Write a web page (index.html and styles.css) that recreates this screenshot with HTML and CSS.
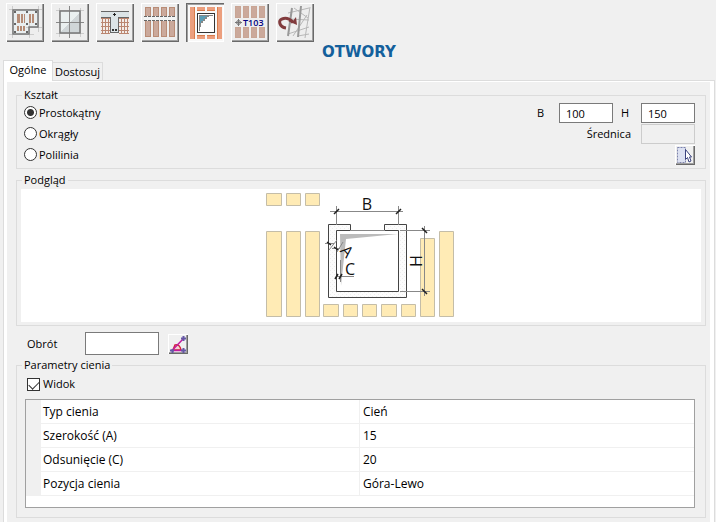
FILE: index.html
```html
<!DOCTYPE html>
<html lang="pl">
<head>
<meta charset="utf-8">
<meta name="viewport" content="width=device-width, initial-scale=1">
<title>Otwory</title>
<link rel="stylesheet" href="styles.css">
</head>
<body>
<header>
  <nav class="toolbar" aria-label="Narzędzia">
    <button class="tool" type="button" aria-label="Płyta">
      <svg viewBox="0 0 38 39" shape-rendering="crispEdges">
        <path d="M6 6H32V24H23V31H6Z" fill="#e9eeef"/>
        <path d="M3 6.500H36M6.500 3V35M32.500 3V29M3 31.500H28M23.500 20V35M20 24.500H36" stroke="#ccc" fill="none"/>
        <path d="M7 7H32V24H23V31H7Z" fill="none" stroke="#777" stroke-width="1.500" shape-rendering="auto"/>
        <path d="M11 11h3v9h-3zM15 11h2v9h-2zM18 11h1v9h-1zM23 11h2v9h-2zM26 11h2v9h-2zM11 23h2v5h-2zM14 23h2v5h-2zM17 23h2v5h-2z" fill="#b58b75"/>
        <path d="M8 8h2v2H8zM20 8h2v2h-2zM29 8h2v2h-2zM8 20h2v2H8zM29 20h2v2h-2zM20 20h2v2h-2zM8 28h2v2H8zM20 28h2v2h-2z" fill="#666"/>
      </svg>
    </button>
    <button class="tool" type="button" aria-label="Okno">
      <svg viewBox="0 0 38 39" shape-rendering="crispEdges">
        <path d="M9 8H29V30H9Z" fill="#eaf0f0"/>
        <path d="M29 10V30H9V29Z" fill="#d0d6d8"/>
        <path d="M5 7.500H33M5 30.500H33M8.500 5V34M29.500 5V34" stroke="#ccc" fill="none"/>
        <path d="M5 19.500H33M18.500 3V35" stroke="#888" fill="none"/>
        <path d="M9 8H29V30H9Z" fill="none" stroke="#777" stroke-width="1.500" shape-rendering="auto"/>
      </svg>
    </button>
    <button class="tool" type="button" aria-label="Podciąg">
      <svg viewBox="0 0 38 39" shape-rendering="crispEdges">
        <path d="M5 15H14V31H5zM23 15H33V31H23z" fill="#f3ece8"/>
        <path d="M5 15.500H14M5 19.500H14M5 23.500H14M5 27.500H14M5 30.500H14M6.500 15V31M9.500 15V31M12.500 15V31M23 15.500H33M23 19.500H33M23 23.500H33M23 27.500H33M23 30.500H33M25.500 15V31M28.500 15V31M31.500 15V31" stroke="#bb8670" fill="none"/>
        <path d="M5 9H33V14H23V30H14V14H5Z" fill="#dce4e7"/>
        <path d="M5 8.500H33M5 14.500H14.500V29.500H22.500V14.500H33" fill="none" stroke="#666"/>
        <path d="M17 11.500H20M18.500 10V13" stroke="#222" fill="none"/>
        <path d="M16 26h2v2h-2zM19 26h2v2h-2z" fill="#333"/>
      </svg>
    </button>
    <button class="tool" type="button" aria-label="Pasy">
      <svg viewBox="0 0 38 39" shape-rendering="crispEdges">
        <path d="M4.500 4.500h5v29h-5zM12.500 4.500h5v29h-5zM20.500 4.500h5v29h-5zM28.500 4.500h5v29h-5z" fill="#cba99b" stroke="#b98c76"/>
        <path d="M3 13H35V18H3z" fill="#f2f4f4"/>
        <path d="M3 13.500H35M3 17.500H35" fill="none" stroke="#666" stroke-dasharray="3 1"/>
      </svg>
    </button>
    <button class="tool tool-active" type="button" aria-label="Otwory" aria-pressed="true">
      <svg viewBox="0 0 38 39" shape-rendering="crispEdges">
        <path d="M4 4h5v32H4zM31 4h5v32h-5zM11 4h8v4h-8zM21 4h8v4h-8zM11 32h8v4h-8zM21 32h8v4h-8z" fill="#ec9f7e"/>
        <path d="M8.500 4v32M31.500 4v32M11 7.500h8M21 7.500h8M11 32.500h8M21 32.500h8" fill="none" stroke="#d97c4b"/>
        <path d="M11.500 10.500H28.500V29.500H11.500Z" fill="#fff" stroke="#333"/>
        <path d="M13 12H27V13H23V14H21V16H19V18H17V20H15V24H14V28H13Z" fill="#888"/>
        <path d="M14 13H21V14H19V16H17V18H15V20H14Z" fill="#5a9db5"/>
      </svg>
    </button>
    <button class="tool" type="button" aria-label="Oznaczenie T103">
      <svg viewBox="0 0 38 39">
        <g shape-rendering="crispEdges"><path d="M4.500 3.500h5v11h-5zM12.500 3.500h5v11h-5zM20.500 3.500h5v11h-5zM28.500 3.500h5v11h-5zM4.500 24.500h5v10h-5zM12.500 24.500h5v10h-5zM20.500 24.500h5v10h-5zM28.500 24.500h5v10h-5z" fill="#cba99b" stroke="#c9a594"/></g>
        <path d="M4 19.500h7M7.500 16v7" stroke="#777"/><circle cx="7.500" cy="19.500" r="2" fill="none" stroke="#777"/>
        <text class="tag" x="12" y="23">T103</text>
      </svg>
    </button>
    <button class="tool" type="button" aria-label="Obróć">
      <svg viewBox="0 0 38 39" fill="none">
        <path d="M34 4L29 35M12 10L33 5M13 16L33 17M12 31L33 24M18 5L32 15M17 33L31 12M22 33L33 31" stroke="#b8b8b8"/>
        <path d="M25 3L22 34M16 5L12 33" stroke="#999" stroke-width="2"/>
        <path d="M10 25C3 24 2 17 6 16C11 14 16 17 17 20" stroke="#813b3d" stroke-width="3"/>
        <path d="M12 18L21 22L20 14L17 18Z" fill="#813b3d"/>
      </svg>
    </button>
  </nav>
  <h1>OTWORY</h1>
</header>

<div class="tabs" role="tablist">
  <button class="tab tab-active" type="button" role="tab" aria-selected="true">Ogólne</button>
  <button class="tab" type="button" role="tab" aria-selected="false">Dostosuj</button>
</div>

<main class="pane">
  <fieldset class="shape">
    <legend>Kształt</legend>
    <div class="shape-body">
      <div class="options">
        <label><input type="radio" name="shape" checked>Prostokątny</label>
        <label><input type="radio" name="shape">Okrągły</label>
        <label><input type="radio" name="shape">Polilinia</label>
      </div>
      <div class="sizes">
        <div class="size-row">
          <label for="b">B</label><input class="box" id="b" type="text" value="100">
          <label class="next" for="h">H</label><input class="box" id="h" type="text" value="150">
        </div>
        <div class="size-row">
          <label class="wide" for="d">Średnica</label><input class="box" id="d" type="text" disabled>
        </div>
        <div class="size-row">
          <button class="mini" type="button" aria-label="Wskaż">
            <svg viewBox="0 0 20 20"><path d="M3 2h7v15H3z" fill="#dce1f2"/><path d="M2.500 2.500H10.500V17.500H2.500Z" fill="none" stroke="#7c83ad" stroke-dasharray="2 1"/><path d="M10.500 4.500V14.500L12.500 12.500L14 17L16 16L14.500 12H16.500Z" fill="#fff" stroke="#3b437f"/></svg>
          </button>
        </div>
      </div>
    </div>
  </fieldset>

  <fieldset class="preview">
    <legend>Podgląd</legend>
    <div class="canvas">
      <svg viewBox="261 189 200 133" role="img" aria-label="Podgląd otworu">
        <defs><pattern id="dots" width="4" height="4" patternUnits="userSpaceOnUse"><rect width="4" height="4" fill="#fcfcfc"/><path d="M0 0h1v1H0zM2 2h1v1H2z" fill="#eee"/></pattern></defs>
        <g fill="#ffebb5" stroke="#c4bda8">
          <path d="M266.500 193.500h15v12h-15zM286.500 193.500h14v12h-14zM305.500 193.500h14v12h-14z"/>
          <path d="M266.500 231.500h15v85h-15zM286.500 231.500h14v85h-14zM305.500 231.500h14v85h-14z"/>
          <path d="M323.500 304.500h15v12h-15zM343.500 304.500h14v12h-14zM362.500 304.500h14v12h-14zM381.500 304.500h15v12h-15zM401.500 304.500h14v12h-14z"/>
          <path d="M420.500 238.500h14v78h-14zM439.500 231.500h14v85h-14z"/>
        </g>
        <path d="M350.500 224.500H328.500V297.500H406.500V224.500H384.500V230.500H398.500V291.500H336.500V230.500H350.500Z" fill="url(#dots)" stroke="#444"/>
        <path d="M350 230.500H385" stroke="#888"/>
        <path d="M340 234H398L346 239L341 286Z" fill="#bbb"/>
        <g fill="none" stroke="#888">
          <path d="M330 211.500H403M336.500 206V225M398.500 206V225"/>
          <path d="M400 230.500H430M400 291.500H430M424.500 226V296"/>
          <path d="M337 276.500H354M340.500 260V282M325 243.500H334M332 248.500H340M329 250L337 240M337 252L343 242"/>
        </g>
        <path d="M334 214L339 209M396 214L401 209M422 228L427 233M422 289L427 294M335 279L338 274M339 279L342 274M327 242L331 245M334 247L338 250" fill="none" stroke="#222" stroke-width="1.500"/>
        <g class="dim">
          <text x="367" y="210">B</text>
          <text x="350" y="275">C</text>
          <text transform="translate(343 255) rotate(48)" x="0" y="0">A</text>
          <text transform="translate(422 261) rotate(-90)" x="0" y="0">H</text>
        </g>
      </svg>
    </div>
  </fieldset>

  <div class="rotation">
    <label for="rot">Obrót</label>
    <input class="box" id="rot" type="text">
    <button class="mini" type="button" aria-label="Wskaż kąt">
      <svg viewBox="0 0 20 20"><path d="M7 11Q12 10 13 16H5Z" fill="#f3d4d0" stroke="#d3273e" stroke-width="1.500"/><path d="M4 16.500L16 4M4 16.500H16" stroke="#c21ca0" stroke-width="1.500"/><path d="M2 16.500h4M4.500 15v4M13 4.500h5M15.500 2v5M13 16.500h5M15.500 14v5" stroke="#6558a5" stroke-width="2"/></svg>
    </button>
  </div>

  <fieldset class="shadow">
    <legend>Parametry cienia</legend>
    <label class="check"><input type="checkbox" checked>Widok</label>
    <div class="grid">
      <table>
        <tbody>
          <tr><th scope="row">Typ cienia</th><td>Cień</td></tr>
          <tr><th scope="row">Szerokość (A)</th><td>15</td></tr>
          <tr><th scope="row">Odsunięcie (C)</th><td>20</td></tr>
          <tr><th scope="row">Pozycja cienia</th><td>Góra-Lewo</td></tr>
        </tbody>
      </table>
    </div>
  </fieldset>
</main>
</body>
</html>
```
FILE: styles.css
```css
* { box-sizing: border-box; }

body {
  margin: 0;
  min-height: 100vh;
  display: flex;
  flex-direction: column;
  background: #f0f0f0;
  color: #000;
  font: 11px/14px "Open Sans", "Noto Sans", sans-serif;
}

button, input { font: inherit; color: inherit; margin: 0; }
svg { display: block; }

.toolbar { display: flex; gap: 7px; padding: 3px 6px 0; }

.tool {
  width: 38px;
  height: 39px;
  padding: 0;
  border: 0;
  background: #eee;
  box-shadow: inset 1px 1px #fff, inset -1px -1px #696969, inset -2px -2px #a0a0a0;
}
.tool-active {
  background: #f8f8f8;
  box-shadow: inset 1px 1px #696969, inset 2px 2px #a0a0a0, inset -1px -1px #fff;
}
.tag { font: 600 9px "Open Sans", sans-serif; fill: #000080; }

h1 {
  margin: 2px 0 0 2px;
  text-align: center;
  color: #14609c;
  font: bold 15px/16px "DejaVu Sans", sans-serif;
}

.tabs { display: flex; align-items: flex-end; padding: 0 3px; }
.tab {
  height: 18px;
  padding: 0;
  width: 50px;
  border: 1px solid #dcdcdc;
  border-width: 1px 1px 0 0;
  background: #f0f0f0;
}
.tab-active {
  height: 21px;
  margin-bottom: -1px;
  padding-bottom: 2px;
  border-left-width: 1px;
  background: #fff;
  position: relative;
}

.pane {
  flex: 1;
  margin: 0 1px 0 3px;
  padding: 7px 8px 4px 12px;
  border: 1px solid #dcdcdc;
  border-bottom: 0;
  box-shadow: inset 3px 1px #fff, inset -4px 0 #fff;
}

fieldset { min-width: 0; margin: 0; padding: 0; border: 1px solid #dcdcdc; }
legend { padding: 0 2px; }

.shape { padding: 0 10px 3px 7px; }
.shape-body { display: flex; justify-content: space-between; }
.shape legend { margin-left: -2px; }
.options label, .size-row { display: flex; height: 21px; }
.options label { align-items: center; gap: 2px; }

input[type="radio"], input[type="checkbox"] {
  appearance: none;
  flex: none;
  width: 13px;
  height: 13px;
  border: 1px solid #333;
  background: #fff;
}
input[type="radio"] { border-radius: 50%; }
input[type="radio"]:checked { background: radial-gradient(circle, #333 3px, #fff 4px); }
input[type="checkbox"]:checked::before {
  content: "";
  display: block;
  width: 9px;
  height: 5px;
  margin: 2px 1px;
  border: solid #333;
  border-width: 0 0 1px 1px;
  transform: rotate(-45deg);
}

.box {
  width: 54px;
  height: 20px;
  padding: 0 6px;
  border: 1px solid #7a7a7a;
  border-radius: 0;
  background: #fff;
}
.box:disabled { border-color: #ccc; background: #f0f0f0; }

.size-row { justify-content: flex-end; align-items: flex-end; }
.size-row label { width: 22px; line-height: 20px; }
.size-row .next { width: 20px; margin-left: 8px; }
.size-row .wide { width: auto; margin-right: 10px; }

.mini {
  width: 20px;
  height: 20px;
  padding: 0;
  border: 0;
  background: #f0f0f0;
  box-shadow: inset 1px 1px #fff, inset -1px -1px #696969, inset -2px -2px #a0a0a0;
}

.preview { margin-top: 4px; padding: 2px 4px 3px; }
.preview legend { margin-left: 1px; }
.canvas { display: flex; justify-content: center; background: #fff; }
.canvas svg { width: 200px; height: 133px; }
.dim { font: 16px "Open Sans", sans-serif; text-anchor: middle; fill: #111; }

.rotation { display: flex; align-items: center; margin-top: 6px; padding-left: 11px; }
.rotation label { width: 58px; }
.rotation .box { width: 74px; height: 23px; margin-right: 9px; }

.shadow { margin-top: 3px; padding: 5px 10px 9px 8px; }
.shadow legend { margin-left: -3px; }
.check { display: flex; align-items: center; gap: 3px; height: 14px; padding-left: 2px; }

.grid {
  margin-top: 8px;
  padding-bottom: 11px;
  border: 1px solid #a0a0a0;
  background: #fff;
}
table {
  width: 100%;
  border-collapse: separate;
  border-spacing: 0;
  table-layout: fixed;
  font-size: 12px;
}
th, td {
  height: 24px;
  padding: 0 0 0 3px;
  border-bottom: 1px solid #f0f0f0;
  text-align: left;
  font-weight: normal;
}
th {
  width: 50%;
  padding-left: 2px;
  border-right: 1px solid #f0f0f0;
  border-left: 15px solid #f0f0f0;
}
```
